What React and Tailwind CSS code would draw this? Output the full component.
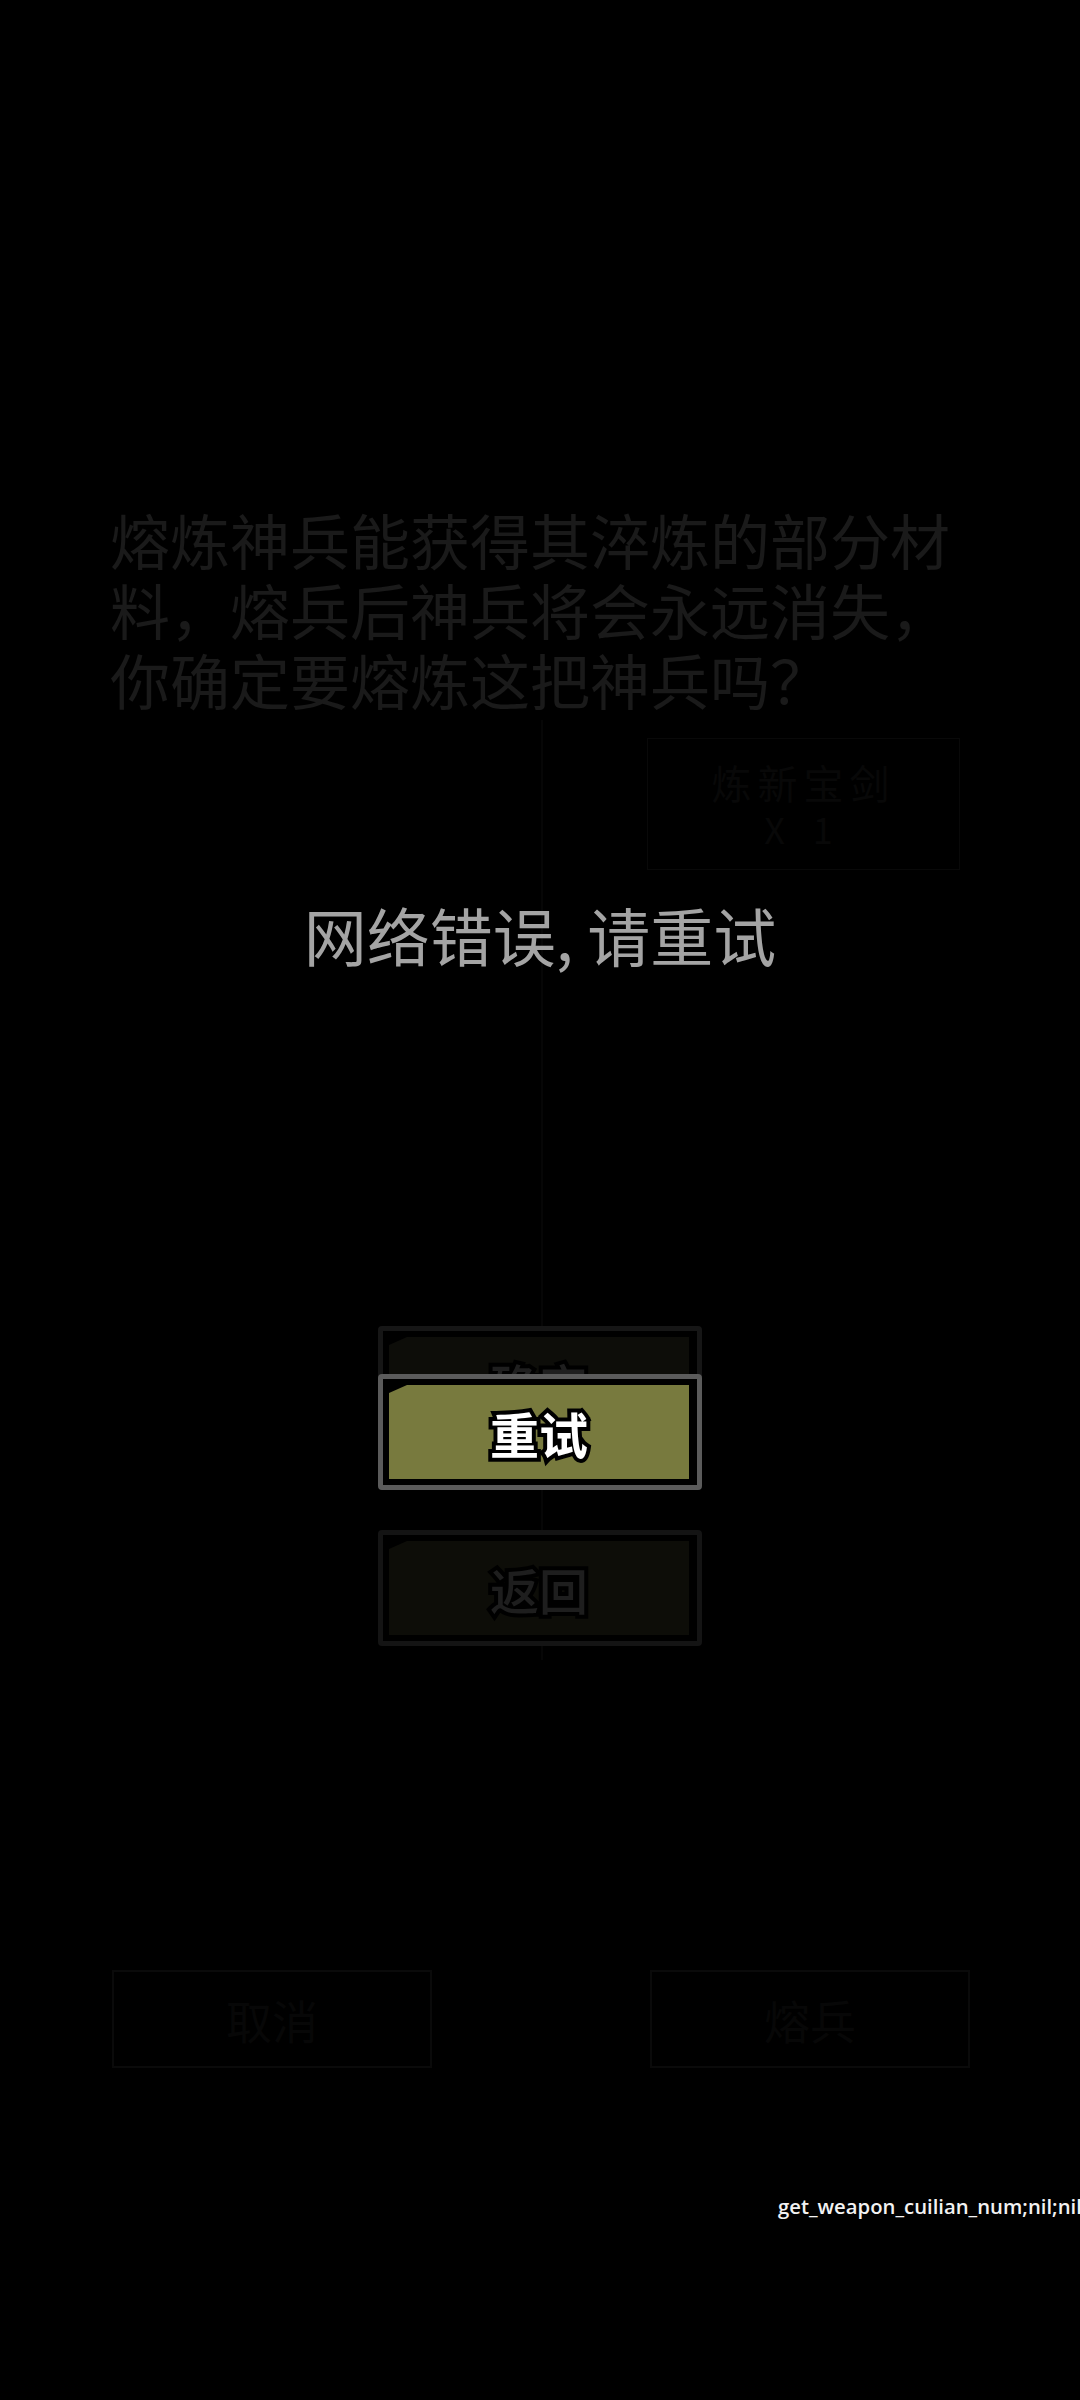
import React from 'react';

const cjk = { fontFamily: '"Noto Sans CJK SC", "Noto Sans", sans-serif' };

// one of the bevelled game buttons
function GameButton({ label, frame, fill, text, bold }) {
  return (
    <div className={`w-[324px] h-[116px] border-[5px] rounded-[4px] pt-[6px] pb-[6px] pl-[6px] pr-[8px] bg-black ${frame}`}>
      <div
        className={`w-full h-full flex items-center justify-center [clip-path:polygon(18px_0,100%_0,100%_100%,0_100%,0_8px)] ${fill}`}
      >
        <span
          className={`text-[49px] leading-none [-webkit-text-stroke:8px_#000] [paint-order:stroke_fill] ${text} ${bold ? 'font-bold' : 'font-medium'}`}
          style={cjk}
        >
          {label}
        </span>
      </div>
    </div>
  );
}

export default function App() {
  return (
    <div className="relative w-[1080px] h-[2400px] bg-black overflow-hidden" style={cjk}>
      {/* faint divider running behind the dialog */}
      <div className="absolute left-[541px] top-[720px] w-[2px] h-[940px] bg-[#060606]" />

      {/* dimmed dialog underneath */}
      <div className="relative flex flex-col">
        <div className="pt-[504px] px-[110px]">
          <p className="w-[860px] text-[60px] leading-[70px] text-[#1a1a1a]">
            熔炼神兵能获得其淬炼的部分材料，熔兵后神兵将会永远消失，你确定要熔炼这把神兵吗？
          </p>
          <div className="ml-[537px] mt-[24px] w-[313px] h-[132px] border border-[#090909] flex flex-col items-center justify-center gap-[8px]">
            <span className="text-[40px] leading-none tracking-[6px] text-[#080808]">炼新宝剑</span>
            <span className="text-[36px] leading-none tracking-[10px] text-[#080808]">X 1</span>
          </div>
        </div>

        <div className="mt-[456px] flex flex-col items-center gap-[88px]">
          <GameButton label="确定" frame="border-[#161616]" fill="bg-[#0d0d09]" text="text-[#1f1f1f]" />
          <GameButton label="返回" frame="border-[#141414]" fill="bg-[#0d0d08]" text="text-[#1e1e1e]" />
        </div>

        <div className="mt-[324px] pl-[112px] flex gap-[218px]">
          <div className="w-[320px] h-[98px] border-2 border-[#0a0a0a] flex items-center justify-center">
            <span className="text-[46px] leading-none text-[#070707]">取消</span>
          </div>
          <div className="w-[320px] h-[98px] border-2 border-[#0a0a0a] flex items-center justify-center">
            <span className="text-[46px] leading-none text-[#070707]">熔兵</span>
          </div>
        </div>

        <div
          className="mt-[124px] pl-[778px] whitespace-nowrap text-[20.3px] leading-[28px] font-semibold text-[#f2f2f2]"
          style={{ fontFamily: '"Open Sans", "DejaVu Sans", sans-serif' }}
        >
          get_weapon_cuilian_num;nil;nil
        </div>
      </div>

      {/* network error overlay */}
      <div className="absolute inset-x-0 top-0 flex flex-col items-center">
        <div className="mt-[898px] text-[63px] leading-[72px] text-[#a4a4a4]">网络错误, 请重试</div>
        <div className="mt-[404px]">
          <GameButton label="重试" frame="border-[#5b5b5b]" fill="bg-[#787a3e]" text="text-white" bold />
        </div>
      </div>
    </div>
  );
}
